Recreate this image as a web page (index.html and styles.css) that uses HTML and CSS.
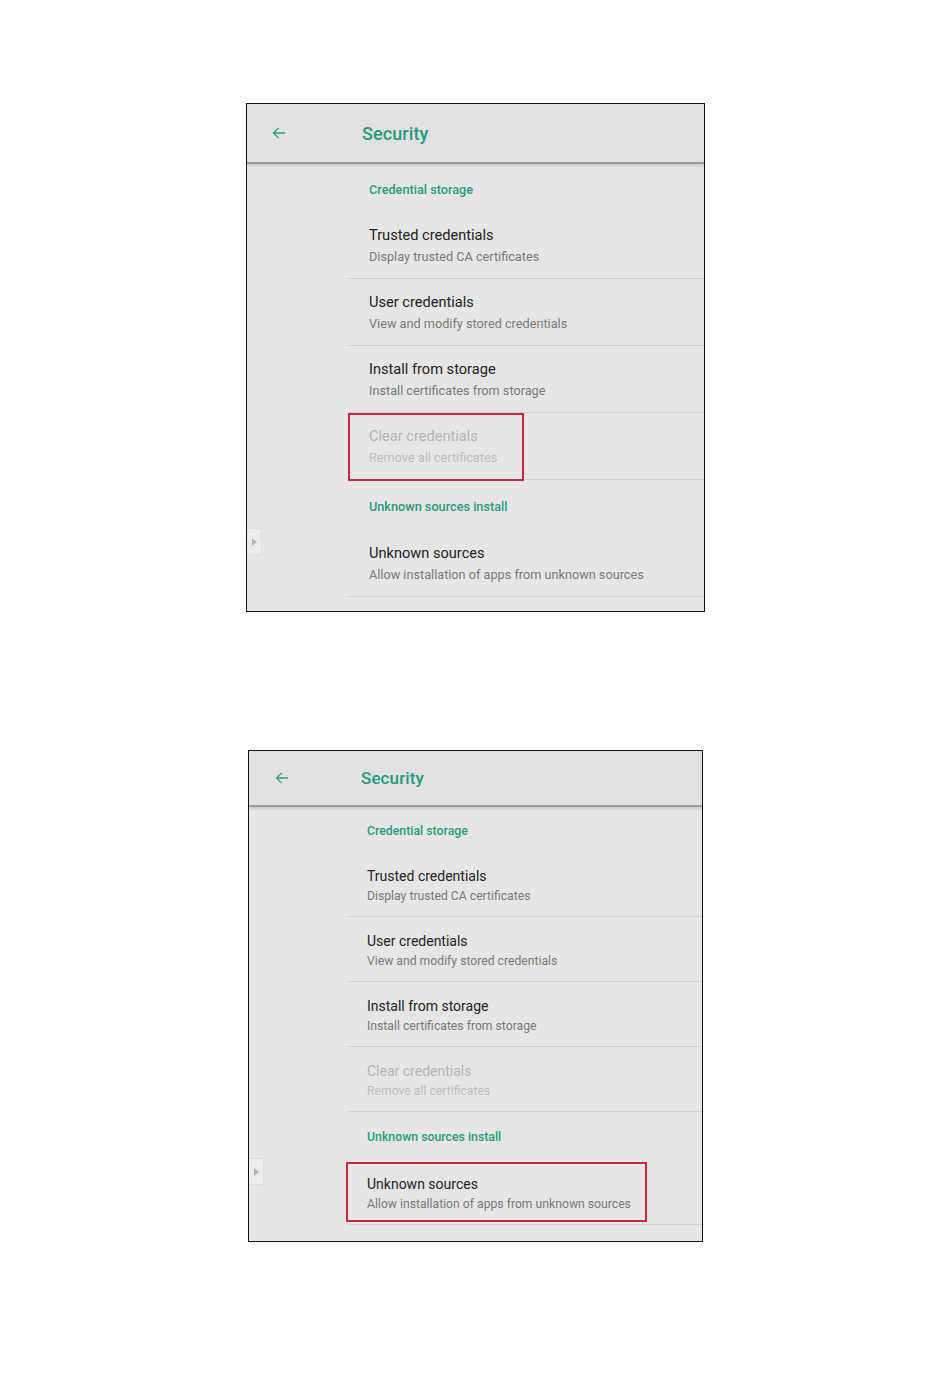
FILE: index.html
```html
<!DOCTYPE html>
<html lang="en">
<head>
<meta charset="utf-8">
<title>Security</title>
<link rel="stylesheet" href="styles.css">
</head>
<body>
<div class="page">

  <section class="panel panel-a">
    <header class="bar">
      <span class="back"><svg viewBox="0 0 24 24" width="18" height="18"><path d="M20 11.1H6.8l5.3-5.3-1.2-1.2L3.5 12l7.4 7.4 1.2-1.2-5.3-5.3H20z" fill="currentColor"/></svg></span>
      <span class="title">Security</span>
    </header>
    <div class="body">
      <span class="tab"><span class="tri"></span></span>
      <ul class="list">
        <li class="cat">Credential storage</li>
        <li class="item"><span class="t">Trusted credentials</span><span class="s">Display trusted CA certificates</span></li>
        <li class="item"><span class="t">User credentials</span><span class="s">View and modify stored credentials</span></li>
        <li class="item"><span class="t">Install from storage</span><span class="s">Install certificates from storage</span></li>
        <li class="item off"><span class="t">Clear credentials</span><span class="s">Remove all certificates</span><span class="mark"></span></li>
        <li class="cat cat2">Unknown sources install</li>
        <li class="item"><span class="t">Unknown sources</span><span class="s">Allow installation of apps from unknown sources</span></li>
      </ul>
    </div>
  </section>

  <section class="panel panel-b">
    <header class="bar">
      <span class="back"><svg viewBox="0 0 24 24" width="18" height="18"><path d="M20 11.1H6.8l5.3-5.3-1.2-1.2L3.5 12l7.4 7.4 1.2-1.2-5.3-5.3H20z" fill="currentColor"/></svg></span>
      <span class="title">Security</span>
    </header>
    <div class="body">
      <span class="tab"><span class="tri"></span></span>
      <ul class="list">
        <li class="cat">Credential storage</li>
        <li class="item"><span class="t">Trusted credentials</span><span class="s">Display trusted CA certificates</span></li>
        <li class="item"><span class="t">User credentials</span><span class="s">View and modify stored credentials</span></li>
        <li class="item"><span class="t">Install from storage</span><span class="s">Install certificates from storage</span></li>
        <li class="item off"><span class="t">Clear credentials</span><span class="s">Remove all certificates</span></li>
        <li class="cat cat2">Unknown sources install</li>
        <li class="item"><span class="t">Unknown sources</span><span class="s">Allow installation of apps from unknown sources</span><span class="mark"></span></li>
      </ul>
    </div>
  </section>

</div>
</body>
</html>
```

FILE: styles.css
```css
* { box-sizing: border-box; }
html, body { margin: 0; padding: 0; background: #ffffff; }
body { font-family: Roboto, "Noto Sans", "Liberation Sans", sans-serif; }

.page {
  display: flex;
  flex-direction: column;
  padding-top: 103px;
  gap: 138px;
}

.panel {
  border: 1px solid #111;
  background: #e6e6e6;
  display: flex;
  flex-direction: column;
  overflow: hidden;
}
.panel-a { margin-left: 246px; width: 459px; height: 509px;
  --hdr: 60px; --cat: 48px; --cat2: 50px; --item: 67px;
  --tsz: 18px; --isz: 14.6px; --ssz: 12.7px; --csz: 12.7px;
  --gap: 21px; --arrowpad: 23px; --arroww: 92px; --tabtop: 364px;
  --lpad: 100px; --ipad: 22px; --ishift: 1px; }
.panel-b { margin-left: 248px; width: 455px; height: 492px;
  --hdr: 56px; --cat: 45px; --cat2: 48px; --item: 65px;
  --tsz: 17px; --isz: 14px; --ssz: 12.2px; --csz: 12.3px;
  --gap: 20px; --arrowpad: 24px; --arroww: 88px; --tabtop: 351px;
  --lpad: 98px; --ipad: 20px; --ishift: 3px; }

.bar {
  height: var(--hdr);
  flex: none;
  display: flex;
  align-items: center;
  background: #e1e1e1;
  border-bottom: 2px solid #9c9c9c;
  box-shadow: 0 2px 2px rgba(0,0,0,0.12);
  padding-left: var(--arrowpad);
  position: relative;
  z-index: 1;
}
.back {
  width: var(--arroww);
  color: #2f9e80;
  display: flex;
  align-items: center;
}
.title {
  font-size: var(--tsz);
  font-weight: 500;
  color: #259b7c;
  letter-spacing: 0.1px;
}

.body {
  flex: 1;
  position: relative;
  padding-left: var(--lpad);
}
.tab {
  position: absolute;
  left: 0;
  top: var(--tabtop);
  width: 15px;
  height: 27px;
  background: #ececec;
  border: 1px solid #dedede;
  border-left: none;
  border-radius: 0 3px 3px 0;
  display: flex;
  align-items: center;
  justify-content: center;
}
.tri {
  width: 0; height: 0;
  border-top: 4px solid transparent;
  border-bottom: 4px solid transparent;
  border-left: 5px solid #b4b4b4;
}

.list { list-style: none; margin: 0; padding: 0; }
.cat {
  height: var(--cat);
  display: flex;
  align-items: center;
  padding-left: var(--ipad);
  padding-top: 2px;
  font-size: var(--csz);
  font-weight: 500;
  color: #2a9a7c;
}
.cat2 { height: var(--cat2); }
.item {
  height: var(--item);
  position: relative;
  display: flex;
  flex-direction: column;
  justify-content: center;
  padding-left: var(--ipad);
  padding-top: var(--ishift);
  border-bottom: 1px solid #d2d2d2;
}
.t { font-size: var(--isz); color: #222; line-height: var(--gap); }
.s { font-size: var(--ssz); color: #787878; line-height: var(--gap); }
.off .t { color: #b3b3b3; }
.off .s { color: #bcbcbc; }

.mark {
  position: absolute;
  border: 2px solid #c02a40;
}
.panel-a .mark { left: 1px; top: 0; width: 176px; height: 68px; }
.panel-b .mark { left: -1px; top: 2px; width: 301px; height: 60px; }
```
